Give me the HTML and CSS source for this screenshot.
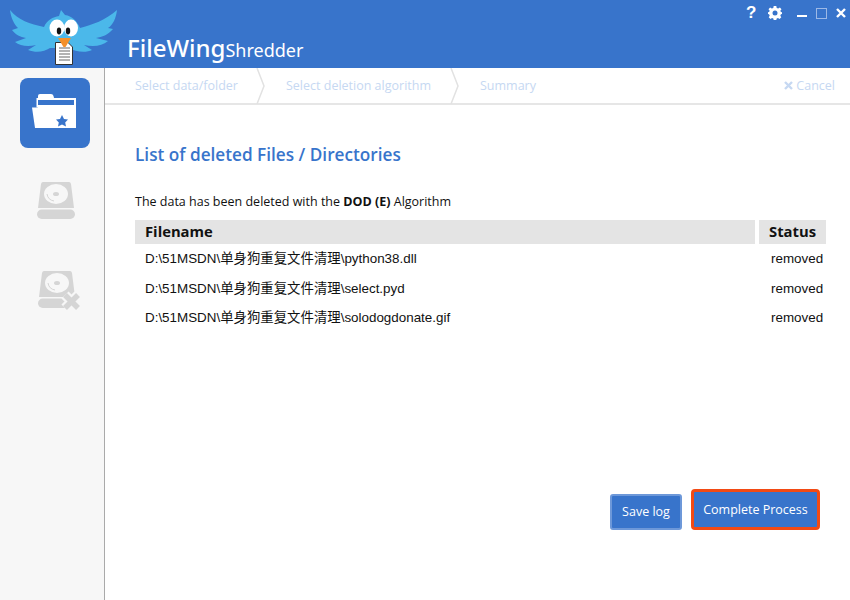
FILE: index.html
```html
<!DOCTYPE html>
<html lang="en">
<head>
  <meta charset="UTF-8">
  <title>FileWing Shredder</title>
  <link rel="stylesheet" href="styles.css">
</head>
<body>
  <header class="top">
    <svg class="logo" width="118" height="68" viewBox="0 0 118 68">
      <path fill="#4bb8ea" d="M10 10 C18 20 30 24 44 27 C47 20 53 17 59 16 L61 10 L65 15 C72 16 77 21 80 28 C92 25 106 20 117 10 C116 18 113 25 108 28 L113 29 C108 35 102 37 96 38 L108 41 C102 46 94 47 84 45 L92 50 C86 53 76 52 68 48 L50 48 C44 52 36 53 28 50 L36 45 C28 47 20 46 15 42 L26 38 C20 37 16 35 12 30 L18 28 C14 24 11 18 10 10 Z"/>
      <ellipse cx="57" cy="28" rx="7.500" ry="8.500" fill="#fff"/>
      <ellipse cx="71" cy="28" rx="7" ry="8.500" fill="#fff"/>
      <ellipse cx="59" cy="31" rx="2.200" ry="3.400" fill="#111"/>
      <ellipse cx="68" cy="31" rx="2.200" ry="3.400" fill="#111"/>
      <path fill="#fff" stroke="#333" d="M55.500 42.500 H68 L72.500 47 V64.500 H55.500 Z"/>
      <path stroke="#999" stroke-width="1.500" d="M59 48 H70 M59 51 H70 M59 54 H70 M59 57 H70 M59 60 H70"/>
      <path fill="#f4902a" d="M58 38 H71 L65.500 47 H63.500 Z"/>
    </svg>
    <div class="brand"><span class="brand-main">FileWing</span><span class="brand-sub">Shredder</span></div>
    <div class="win-controls">
      <span class="help">?</span>
      <svg class="gear" width="14" height="14" viewBox="0 0 14 14">
        <path fill="#fff" d="M5.700 0 H8.300 L8.700 2 L10.200 2.600 L11.900 1.500 L13.500 3.300 L12.300 4.800 L12.900 6 L14 6.300 V8 L12.900 8.300 L12.300 9.700 L13.300 11.300 L11.500 13 L10 11.900 L8.700 12.400 L8.300 14 H5.700 L5.300 12.400 L4 11.900 L2.500 13 L.7 11.300 L1.700 9.700 L1.100 8.300 L0 8 V6.300 L1.100 6 L1.700 4.800 L.5 3.300 L2.100 1.500 L3.800 2.600 L5.300 2 Z"/>
        <circle cx="7" cy="7" r="2.500" fill="#3874cb"/>
      </svg>
      <span class="min"></span>
      <span class="max"></span>
      <svg class="close" width="10" height="10" viewBox="0 0 10 10">
        <path stroke="#fff" stroke-width="2.400" d="M1 1 L9 9 M9 1 L1 9"/>
      </svg>
    </div>
  </header>

  <div class="layout">
    <aside class="sidebar">
      <div class="side-item active">
        <svg class="folder" width="44" height="34" viewBox="0 0 44 34">
          <path fill="#fff" d="M6 4 V2 Q6 0 8 0 H19 Q21 0 21.500 2 L22 4 Z"/>
          <path fill="#fff" d="M4.500 4 H44 V34 H42 V6 H6 V13.500 H4.500 Z"/>
          <path fill="#fff" d="M0 13.500 H6 V11 H42 V34 H3 Z"/>
          <path fill="#3874cb" d="M30 21 L32 25 L36 25.500 L33.200 28.500 L34 32.500 L30 30.500 L26 32.500 L26.800 28.500 L24 25.500 L28 25 Z"/>
        </svg>
      </div>
      <div class="side-item">
        <svg class="drive" width="38" height="38" viewBox="0 0 38 38">
          <path fill="#d5d5d5" d="M6 0 H32 Q33.500 0 34 2 L37 26 H1 L4 2 Q4.500 0 6 0 Z"/>
          <rect y="27.500" width="38" height="9.500" rx="4.700" fill="#d5d5d5"/>
          <ellipse cx="19" cy="12" rx="12" ry="10" fill="#f7f7f7"/>
          <ellipse cx="19" cy="12" rx="3" ry="2" fill="#d5d5d5"/>
          <path fill="none" stroke="#d5d5d5" d="M10 12 Q11 18 17 19"/>
        </svg>
      </div>
      <div class="side-item">
        <svg class="drive-x" width="44" height="40" viewBox="0 0 44 40">
          <path fill="#d5d5d5" d="M6 0 H32 Q33.500 0 34 2 L37 26 H1 L4 2 Q4.500 0 6 0 Z"/>
          <rect y="27.500" width="32" height="9.500" rx="4.700" fill="#d5d5d5"/>
          <ellipse cx="19" cy="12" rx="12" ry="10" fill="#f7f7f7"/>
          <ellipse cx="19" cy="12" rx="3" ry="2" fill="#d5d5d5"/>
          <path fill="none" stroke="#d5d5d5" d="M10 12 Q11 18 17 19"/>
          <path stroke="#f7f7f7" stroke-width="10" d="M27 24 L40 37 M40 24 L27 37"/>
          <path stroke="#d5d5d5" stroke-width="5.500" d="M27 24 L40 37 M40 24 L27 37"/>
        </svg>
      </div>
    </aside>

    <main class="content">
      <div class="steps">
        <span class="step step-one">Select data/folder</span>
        <svg class="chevron" width="12" height="36" viewBox="0 0 12 36"><path fill="none" stroke="#e2e2e2" stroke-width="1.500" d="M1 0 L8 18 L1 36"/></svg>
        <span class="step step-two">Select deletion algorithm</span>
        <svg class="chevron" width="12" height="36" viewBox="0 0 12 36"><path fill="none" stroke="#e2e2e2" stroke-width="1.500" d="M1 0 L8 18 L1 36"/></svg>
        <span class="step step-three">Summary</span>
        <span class="cancel">
          <svg width="9" height="9" viewBox="0 0 9 9"><path stroke="#c6d8f2" stroke-width="2.400" d="M1 1 L8 8 M8 1 L1 8"/></svg>
          Cancel
        </span>
      </div>

      <div class="panel">
        <h2 class="title">List of deleted Files / Directories</h2>
        <p class="note">The data has been deleted with the <b>DOD (E)</b> Algorithm</p>

        <div class="file-table">
          <div class="head-file">Filename</div>
          <div class="head-status">Status</div>
          <div class="cell-file">D:\51MSDN\单身狗重复文件清理\python38.dll</div>
          <div class="cell-status">removed</div>
          <div class="cell-file">D:\51MSDN\单身狗重复文件清理\select.pyd</div>
          <div class="cell-status">removed</div>
          <div class="cell-file">D:\51MSDN\单身狗重复文件清理\solodogdonate.gif</div>
          <div class="cell-status">removed</div>
        </div>

        <div class="actions">
          <button class="btn btn-save">Save log</button>
          <button class="btn btn-done">Complete Process</button>
        </div>
      </div>
    </main>
  </div>
</body>
</html>
```

FILE: styles.css
```css
* {
  box-sizing: border-box;
}

body {
  margin: 0;
  height: 600px;
  overflow: hidden;
  background-color: #fff;
  font-family: "Open Sans", "Noto Sans CJK SC", sans-serif;
  color: #111;
}

.top {
  height: 68px;
  background-color: #3874cb;
  display: flex;
}

.logo {
  flex: none;
  overflow: visible;
}

.brand {
  margin-left: 9px;
  margin-top: 33px;
  color: #fff;
  line-height: 30px;
  white-space: nowrap;
}

.brand-main {
  font-family: "Noto Sans", sans-serif;
  font-size: 24px;
  font-weight: 500;
}

.brand-sub {
  font-family: "Noto Sans", sans-serif;
  font-size: 18px;
}

.win-controls {
  margin-left: auto;
  height: 26px;
  padding-right: 4px;
  display: flex;
  align-items: center;
  color: #fff;
}

.help {
  font-family: "Liberation Sans", sans-serif;
  font-size: 17px;
  font-weight: 700;
  width: 15px;
}

.gear {
  margin-left: 7px;
}

.min {
  width: 10px;
  height: 2px;
  margin: 6px 0 0 15px;
  background-color: #fff;
}

.max {
  width: 11px;
  height: 11px;
  margin-left: 9px;
  border: 1px solid #9db9e6;
}

.close {
  margin-left: 9px;
}

.layout {
  display: flex;
  height: 532px;
}

.sidebar {
  width: 105px;
  flex: none;
  background-color: #f7f7f7;
  border-right: 1px solid #aaa;
  padding: 10px 14px 0 20px;
}

.side-item {
  width: 70px;
  height: 70px;
  margin-bottom: 19px;
  display: flex;
  align-items: center;
  justify-content: center;
  border-radius: 8px;
}

.side-item.active {
  background-color: #3874cb;
}

.folder {
  margin: 0 2px 4px 0;
}

.drive {
  margin: 0 0 2px 2px;
}

.drive-x {
  margin-left: 9px;
}

.content {
  flex: 1;
  min-width: 0;
}

.steps {
  height: 37px;
  display: flex;
  align-items: center;
  border-bottom: 2px solid #e6e6e6;
  color: #c6d8f2;
  font-size: 12.500px;
  white-space: nowrap;
}

.step-one {
  margin-left: 30px;
  width: 122px;
}

.step-two {
  margin-left: 18px;
  width: 165px;
}

.step-three {
  margin-left: 18px;
}

.chevron {
  flex: none;
  margin-left: -1px;
}

.cancel {
  margin-left: auto;
  padding-right: 15px;
}

.panel {
  padding: 0 24px 0 30px;
}

.title {
  margin: 40px 0 0;
  font-size: 17.200px;
  line-height: 20px;
  font-weight: 600;
  color: #3874cb;
}

.note {
  margin: 28px 0 0;
  font-size: 12.500px;
  line-height: 18px;
}

.file-table {
  margin-top: 9px;
  display: grid;
  grid-template-columns: 620px 67px;
  column-gap: 4px;
}

.head-file,
.head-status {
  height: 24px;
  line-height: 22px;
  background-color: #e4e4e4;
  font-size: 14.800px;
  font-weight: 700;
}

.head-file {
  padding-left: 10px;
}

.head-status {
  padding-left: 10px;
}

.cell-file,
.cell-status {
  height: 29.500px;
  line-height: 29px;
  font-family: "Liberation Sans", "Noto Sans CJK SC", sans-serif;
  font-size: 13.400px;
}

.cell-file {
  padding-left: 10px;
}

.cell-status {
  padding-left: 12px;
}

.actions {
  margin-top: 156px;
  margin-right: 6px;
  display: flex;
  justify-content: flex-end;
  align-items: flex-end;
  gap: 9px;
}

.btn {
  color: #fff;
  font-family: "Open Sans", sans-serif;
  font-size: 12.500px;
  background-color: #3874cb;
  border-radius: 3px;
  padding: 0;
}

.btn-save {
  width: 72px;
  height: 36px;
  border: 2px solid #6d98d9;
}

.btn-done {
  width: 129px;
  height: 41px;
  border: 3px solid #f24a14;
  border-radius: 4px;
}
```
